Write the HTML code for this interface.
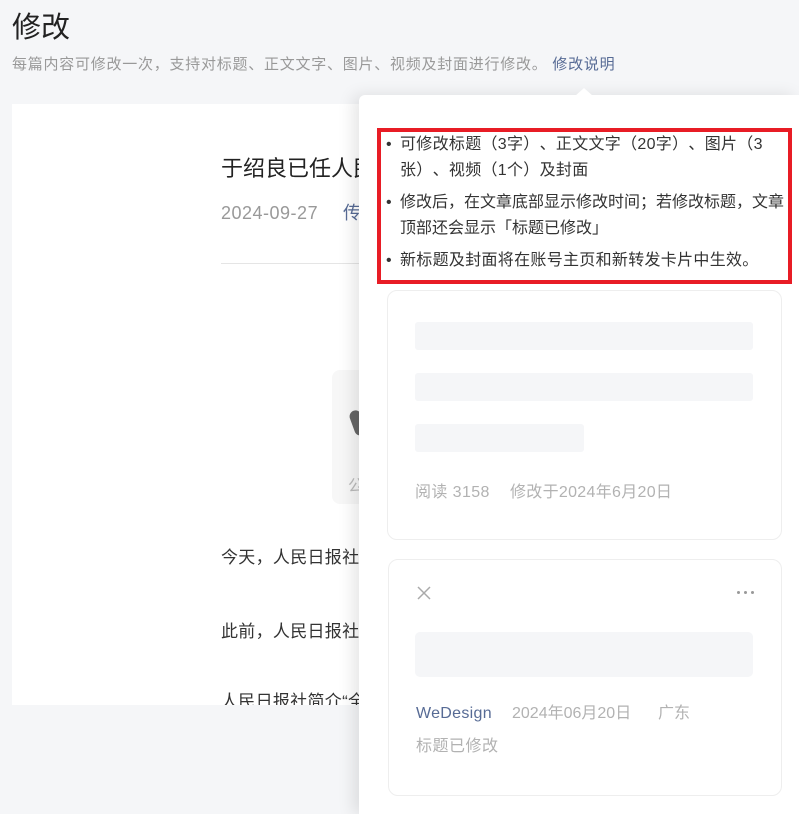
<!DOCTYPE html>
<html><head><meta charset="utf-8"><style>
*{margin:0;padding:0;box-sizing:border-box}
body{width:799px;height:814px;overflow:hidden;background:#f5f6f8;font-family:"Liberation Sans","Noto Sans CJK SC",sans-serif;position:relative;text-spacing-trim:space-all}
.a{position:absolute;white-space:nowrap}
</style></head><body>
<div class="a" style="left:12px;top:10px;font-size:29px;color:#222;line-height:36px">修改</div>
<div class="a" style="left:12px;top:55px;font-size:15px;color:#999;line-height:20px;letter-spacing:0.75px">每篇内容可修改一次，支持对标题、正文文字、图片、视频及封面进行修改。 <span style="color:#576b95">修改说明</span></div>

<div class="a" style="left:12px;top:104px;width:360px;height:601px;background:#fff;overflow:hidden">
  <div class="a" style="left:209px;top:51px;font-size:22px;color:#222;line-height:28px">于绍良已任人民日报社</div>
  <div class="a" style="left:209px;top:98px;font-size:18px;color:#999;line-height:22px;letter-spacing:0.5px">2024-09-27</div>
  <div class="a" style="left:331px;top:98px;font-size:18px;color:#576b95;line-height:22px">传</div>
  <div class="a" style="left:209px;top:159px;width:200px;height:1px;background:#e5e5e5"></div>
  <div class="a" style="left:320px;top:266px;width:60px;height:134px;background:#f7f7f7;border-radius:8px"></div>
  <div class="a" style="left:340px;top:306px;width:12px;height:26px;background:#666;border-radius:6px;transform:rotate(-20deg)"></div>
  <div class="a" style="left:336px;top:368px;font-size:16px;color:#bbb">公</div>
  <div class="a" style="left:209px;top:443px;font-size:17px;color:#333;line-height:22px;letter-spacing:0.3px">今天，人民日报社</div>
  <div class="a" style="left:209px;top:517px;font-size:17px;color:#333;line-height:22px;letter-spacing:0.3px">此前，人民日报社</div>
  <div class="a" style="left:209px;top:587px;font-size:17px;color:#333;line-height:22px;letter-spacing:0.3px">人民日报社简介“全</div>
</div>

<div class="a" style="left:359px;top:95px;width:440px;height:719px;background:#fff;box-shadow:-6px 0 16px rgba(0,0,0,0.10);border-radius:6px 0 0 0"></div>
<div class="a" style="left:575px;top:88px;width:0;height:0;border-left:9px solid transparent;border-right:9px solid transparent;border-bottom:8px solid #fff"></div>

<div class="a" style="left:377px;top:128px;width:415px;height:156px;border:4px solid #e81c25;background:#fff"></div>
<div class="a" style="left:386px;top:132px;width:398px;font-size:16px;color:#333;line-height:26px;white-space:normal;letter-spacing:0.3px">
  <div style="position:relative;padding-left:14px;margin-bottom:6px">
    <span style="position:absolute;left:0">•</span>可修改标题（3字）、正文文字（20字）、图片（3张）、视频（1个）及封面</div>
  <div style="position:relative;padding-left:14px;margin-bottom:6px;white-space:nowrap;letter-spacing:0">
    <span style="position:absolute;left:0">•</span>修改后，在文章底部显示修改时间；若修改标题，文章<br>顶部还会显示「标题已修改」</div>
  <div style="position:relative;padding-left:14px">
    <span style="position:absolute;left:0">•</span>新标题及封面将在账号主页和新转发卡片中生效。</div>
</div>

<div class="a" style="left:387px;top:290px;width:395px;height:250px;border:1px solid #eee;border-radius:10px"></div>
<div class="a" style="left:415px;top:322px;width:338px;height:28px;background:#f5f6f8;border-radius:3px"></div>
<div class="a" style="left:415px;top:373px;width:338px;height:28px;background:#f5f6f8;border-radius:3px"></div>
<div class="a" style="left:415px;top:424px;width:169px;height:28px;background:#f5f6f8;border-radius:3px"></div>
<div class="a" style="left:415px;top:483px;font-size:16px;color:#b2b2b2;line-height:20px;letter-spacing:0.4px">阅读 3158</div>
<div class="a" style="left:510px;top:483px;font-size:16px;color:#b2b2b2;line-height:20px;letter-spacing:0.3px">修改于2024年6月20日</div>

<div class="a" style="left:388px;top:559px;width:394px;height:237px;border:1px solid #eee;border-radius:10px"></div>
<svg class="a" style="left:416px;top:585px" width="16" height="16" viewBox="0 0 16 16"><path d="M2 2L14 14M14 2L2 14" stroke="#aaa" stroke-width="1.5"/></svg>
<div class="a" style="left:737px;top:591px;width:18px;height:4px">
  <span style="position:absolute;left:0;width:3px;height:3px;border-radius:2px;background:#999"></span>
  <span style="position:absolute;left:7px;width:3px;height:3px;border-radius:2px;background:#999"></span>
  <span style="position:absolute;left:14px;width:3px;height:3px;border-radius:2px;background:#999"></span>
</div>
<div class="a" style="left:415px;top:632px;width:338px;height:45px;background:#f5f6f8;border-radius:5px"></div>
<div class="a" style="left:416px;top:704px;font-size:16px;color:#576b95;line-height:20px;letter-spacing:0.3px">WeDesign</div>
<div class="a" style="left:512px;top:704px;font-size:16px;color:#b2b2b2;line-height:20px">2024年06月20日</div>
<div class="a" style="left:658px;top:704px;font-size:16px;color:#b2b2b2;line-height:20px">广东</div>
<div class="a" style="left:416px;top:737px;font-size:16px;color:#b2b2b2;line-height:20px;letter-spacing:0.5px">标题已修改</div>
</body></html>
